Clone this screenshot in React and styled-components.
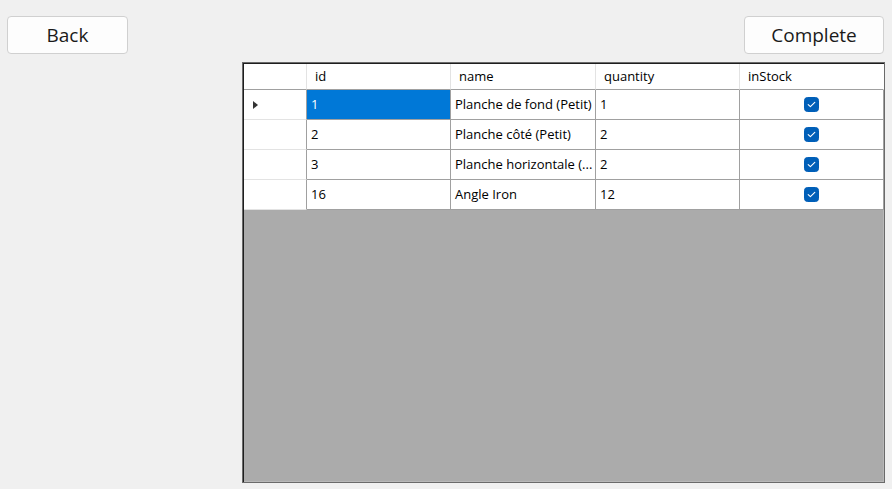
import React from 'react'
import styled, { createGlobalStyle } from 'styled-components'

const GlobalStyle = createGlobalStyle`
    html, body {
        margin: 0;
        padding: 0;
        background: #f0f0f0;
    }
    body {
        font-family: "Segoe UI", "Open Sans", "Liberation Sans", sans-serif;
    }
`

const Page = styled.div`
    width: 892px;
    height: 489px;
    box-sizing: border-box;
    padding: 16px 8px 0 7px;
    display: flex;
    flex-direction: column;
`

const TopBar = styled.div`
    display: flex;
    justify-content: space-between;
    height: 38px;
`

const Button = styled.button`
    width: ${props => props.w}px;
    height: 38px;
    background: #fdfdfd;
    border: 1px solid #d0d0d0;
    border-radius: 4px;
    font-family: "Segoe UI", "Open Sans", "Liberation Sans", sans-serif;
    font-size: 19px;
    color: #1a1a1a;
    padding: 0 0 1px;
    cursor: pointer;
`

const GridBox = styled.div`
    margin: 8px 0 0 235px;
    width: 643px;
    height: 421px;
    box-sizing: border-box;
    border: 1px solid #6a6a6a;
    box-shadow: inset 1px 1px 0 #1e1e1e, inset -1px -1px 0 #b8b8b8;
    padding: 1px;
    background: #ababab;
    display: flex;
    flex-direction: column;
`

const Row = styled.div`
    display: grid;
    grid-template-columns: 63px 144px 145px 144px 144px;
    height: ${props => props.h}px;
`

const HeaderCell = styled.div`
    background: #fff;
    border-right: 1px solid ${props => props.last ? '#fff' : '#e3e3e3'};
    border-bottom: 1px solid #a0a0a0;
    box-sizing: border-box;
    padding: 0 0 1px 8px;
    display: flex;
    align-items: center;
    font-size: 13px;
    color: #000;
    white-space: nowrap;
`

const RowHead = styled.div`
    background: #fff;
    border-right: 1px solid #a0a0a0;
    border-bottom: 1px solid #e3e3e3;
    box-sizing: border-box;
    display: flex;
    align-items: center;
    padding-left: 9px;
`

const Cell = styled.div`
    background: ${props => props.selected ? '#0078d7' : '#fff'};
    color: ${props => props.selected ? '#fff' : '#000'};
    border-right: 1px solid #a0a0a0;
    border-bottom: 1px solid #a0a0a0;
    box-sizing: border-box;
    display: flex;
    align-items: center;
    justify-content: ${props => props.center ? 'center' : 'flex-start'};
    padding: 0 ${props => props.center ? '0' : '4px'} 1px ${props => props.center ? '0' : '4px'};
    font-size: 13px;
    white-space: nowrap;
    overflow: hidden;
`

const Arrow = styled.span`
    width: 0;
    height: 0;
    border-top: 4px solid transparent;
    border-bottom: 4px solid transparent;
    border-left: 5px solid #333;
`

const Check = () => (
    <svg width="15" height="15" viewBox="0 0 15 15">
        <rect x="0.5" y="0.5" width="14" height="14" rx="3" fill="#005fb8" stroke="#005fb8" />
        <path d="M4.2 7.6 L6.4 9.7 L10.8 5.3" fill="none" stroke="#fff" strokeWidth="1.1" strokeLinecap="round" strokeLinejoin="round" />
    </svg>
)

const rows = [
    { id: 1, name: 'Planche de fond (Petit)', quantity: 1 },
    { id: 2, name: 'Planche côté (Petit)', quantity: 2 },
    { id: 3, name: 'Planche horizontale (...', quantity: 2 },
    { id: 16, name: 'Angle Iron', quantity: 12 },
]

const App = () => {
    return (
        <Page>
            <GlobalStyle />
            <TopBar>
                <Button w={121}>Back</Button>
                <Button w={140}>Complete</Button>
            </TopBar>
            <GridBox>
                <Row h={26}>
                    <HeaderCell />
                    <HeaderCell>id</HeaderCell>
                    <HeaderCell>name</HeaderCell>
                    <HeaderCell>quantity</HeaderCell>
                    <HeaderCell last>inStock</HeaderCell>
                </Row>
                {rows.map((r, i) => (
                    <Row h={30} key={r.id}>
                        <RowHead>{i === 0 && <Arrow />}</RowHead>
                        <Cell selected={i === 0}>{r.id}</Cell>
                        <Cell>{r.name}</Cell>
                        <Cell>{r.quantity}</Cell>
                        <Cell center><Check /></Cell>
                    </Row>
                ))}
            </GridBox>
        </Page>
    )
}

export default App
